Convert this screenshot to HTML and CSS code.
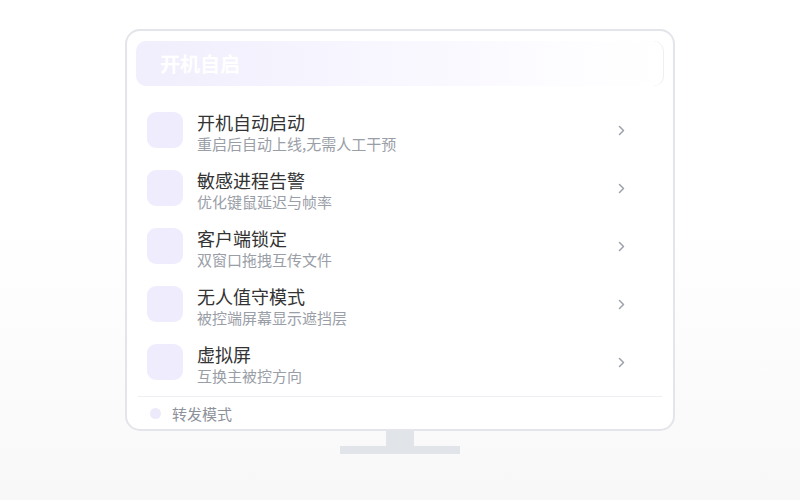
FILE: index.html
```html
<!DOCTYPE html>
<html lang="zh-CN">
<head>
  <meta charset="UTF-8">
  <title>开机自启</title>
  <link rel="stylesheet" href="styles.css">
</head>
<body>
  <div class="monitor">
    <div class="screen">
      <div class="header">开机自启</div>
      <ul class="list">
        <li class="row">
          <div class="icon"></div>
          <div class="text">
            <div class="title">开机自动启动</div>
            <div class="sub">重启后自动上线,无需人工干预</div>
          </div>
          <svg class="chevron" width="7" height="11" viewBox="0 0 7 11"><path d="M1.5 1.5 L5.5 5.5 L1.5 9.5" fill="none" stroke="#9ba0a9" stroke-width="1.5" stroke-linecap="round" stroke-linejoin="round"/></svg>
        </li>
        <li class="row">
          <div class="icon"></div>
          <div class="text">
            <div class="title">敏感进程告警</div>
            <div class="sub">优化键鼠延迟与帧率</div>
          </div>
          <svg class="chevron" width="7" height="11" viewBox="0 0 7 11"><path d="M1.5 1.5 L5.5 5.5 L1.5 9.5" fill="none" stroke="#9ba0a9" stroke-width="1.5" stroke-linecap="round" stroke-linejoin="round"/></svg>
        </li>
        <li class="row">
          <div class="icon"></div>
          <div class="text">
            <div class="title">客户端锁定</div>
            <div class="sub">双窗口拖拽互传文件</div>
          </div>
          <svg class="chevron" width="7" height="11" viewBox="0 0 7 11"><path d="M1.5 1.5 L5.5 5.5 L1.5 9.5" fill="none" stroke="#9ba0a9" stroke-width="1.5" stroke-linecap="round" stroke-linejoin="round"/></svg>
        </li>
        <li class="row">
          <div class="icon"></div>
          <div class="text">
            <div class="title">无人值守模式</div>
            <div class="sub">被控端屏幕显示遮挡层</div>
          </div>
          <svg class="chevron" width="7" height="11" viewBox="0 0 7 11"><path d="M1.5 1.5 L5.5 5.5 L1.5 9.5" fill="none" stroke="#9ba0a9" stroke-width="1.5" stroke-linecap="round" stroke-linejoin="round"/></svg>
        </li>
        <li class="row">
          <div class="icon"></div>
          <div class="text">
            <div class="title">虚拟屏</div>
            <div class="sub">互换主被控方向</div>
          </div>
          <svg class="chevron" width="7" height="11" viewBox="0 0 7 11"><path d="M1.5 1.5 L5.5 5.5 L1.5 9.5" fill="none" stroke="#9ba0a9" stroke-width="1.5" stroke-linecap="round" stroke-linejoin="round"/></svg>
        </li>
      </ul>
      <div class="divider"></div>
      <div class="footer">
        <span class="dot"></span>
        <span>转发模式</span>
      </div>
    </div>
    <div class="neck"></div>
    <div class="base"></div>
  </div>
</body>
</html>
```

FILE: styles.css
```css
html {
  height: 100%;
}
body {
  margin: 0;
  min-height: 100%;
  background: linear-gradient(180deg, #fff 0%, #fff 45%, #f8f8f9 100%);
  font-family: "Noto Sans CJK SC", "Noto Sans", sans-serif;
}
.monitor {
  display: flex;
  flex-direction: column;
  align-items: center;
  padding-top: 29px;
}
.screen {
  box-sizing: border-box;
  width: 550px;
  height: 402px;
  border: 2px solid #e3e5ea;
  border-radius: 15px;
  padding: 10px 9px 0 9px;
  background: #fff;
}
.header {
  height: 45px;
  border-radius: 10px;
  background: linear-gradient(90deg, #f1eefd 0%, #f8f6ff 45%, #fdfcff 80%, #fff 100%);
  box-shadow: inset -1px 0 0 #eeeef3;
  color: #fff;
  font-size: 20px;
  font-weight: bold;
  line-height: 45px;
  padding-left: 24px;
}
.list {
  list-style: none;
  margin: 15px 0 0 0;
  padding: 0;
}
.row {
  display: flex;
  align-items: flex-start;
  height: 58px;
  box-sizing: border-box;
  padding: 10px 0 0 11px;
}
.icon {
  width: 36px;
  height: 36px;
  margin-top: 1px;
  border-radius: 9px;
  background: #efecfd;
}
.text {
  flex: 1;
  margin-left: 14px;
}
.title {
  font-size: 18px;
  line-height: 22px;
  color: #333;
}
.sub {
  font-size: 15px;
  line-height: 22px;
  color: #9a9ea7;
}
.chevron {
  margin: 14px 39px 0 0;
}
.divider {
  height: 1px;
  margin: 5px 2px 0 2px;
  background: #eeeff2;
}
.footer {
  display: flex;
  align-items: center;
  height: 32px;
  padding-left: 14px;
  font-size: 15px;
  color: #8d919a;
}
.dot {
  width: 11px;
  height: 11px;
  border-radius: 50%;
  background: #ece9fb;
  margin-right: 11px;
}
.neck {
  width: 28px;
  height: 15px;
  background: #e1e4e8;
}
.base {
  width: 120px;
  height: 8px;
  background: #e1e4e8;
}
```
